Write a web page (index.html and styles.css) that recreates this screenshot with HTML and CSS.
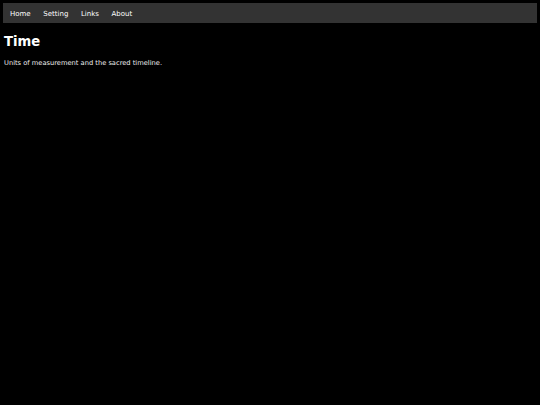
FILE: index.html
```html
<!DOCTYPE html>
<html>
<head>
<meta charset="utf-8">
<link rel="stylesheet" href="styles.css">
</head>
<body>
<nav class="nav">
  <a class="nav-link" href="#">Home</a>
  <a class="nav-link" href="#">Setting</a>
  <a class="nav-link" href="#">Links</a>
  <a class="nav-link" href="#">About</a>
</nav>
<main class="content">
  <h1 class="title">Time</h1>
  <p class="lead">Units of measurement and the sacred timeline.</p>
</main>
</body>
</html>
```
FILE: styles.css
```css
html, body {
  background: #000;
}
body {
  margin: 3px;
  font-family: "DejaVu Sans", sans-serif;
  color: #fff;
}
.nav {
  display: flex;
  gap: 12.6px;
  align-items: center;
  background: #333;
  height: 20px;
  box-sizing: border-box;
  padding: 1px 7px 0;
}
.nav-link {
  color: #fff;
  text-decoration: none;
  font-size: 7px;
}
.content {
  padding: 0 1px;
}
.title {
  font-size: 13.2px;
  font-weight: bold;
  margin: 11px 0 10px;
}
.lead {
  font-size: 6.7px;
  margin: 0;
  color: #eee;
}
```
